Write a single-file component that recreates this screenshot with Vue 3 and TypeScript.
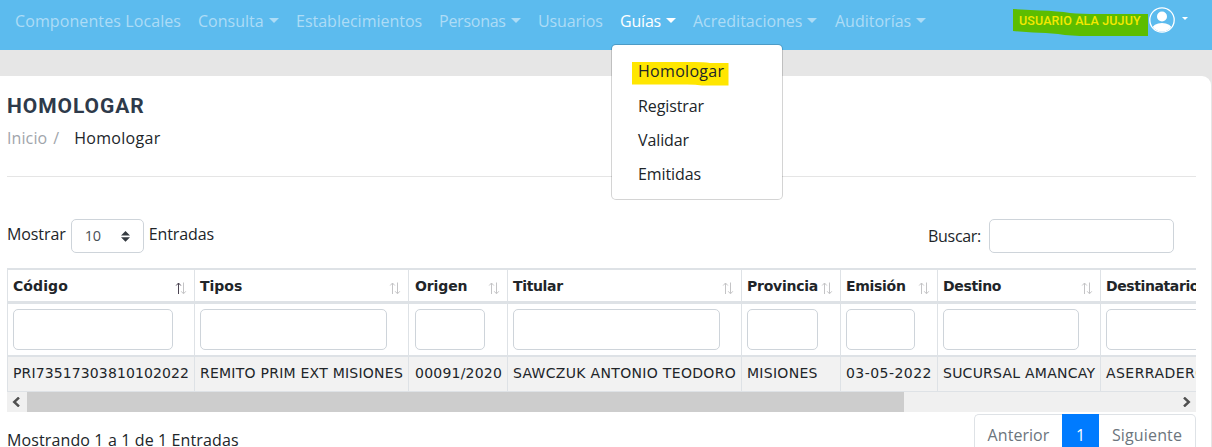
<script setup lang="ts">
interface NavItem { label: string; width: number; spacing: number; caret?: boolean; active?: boolean }
interface Column { title: string; value: string; width: number; field: number; titleSpacing: number; spacing: number; wide?: boolean }

const navItems: NavItem[] = [
  { label: 'Componentes Locales', width: 183, spacing: 0.1 },
  { label: 'Consulta', width: 98, spacing: 0, caret: true },
  { label: 'Establecimientos', width: 143, spacing: 0 },
  { label: 'Personas', width: 99, spacing: -0.25, caret: true },
  { label: 'Usuarios', width: 82, spacing: -0.15 },
  { label: 'Guías', width: 73, spacing: -0.2, caret: true, active: true },
  { label: 'Acreditaciones', width: 142, spacing: 0, caret: true },
  { label: 'Auditorías', width: 100, spacing: 0, caret: true },
]

const menuItems: string[] = ['Homologar', 'Registrar', 'Validar', 'Emitidas']

const columns: Column[] = [
  { title: 'Código', value: 'PRI73517303810102022', width: 187, field: 160, titleSpacing: 0.1, spacing: 0.12 },
  { title: 'Tipos', value: 'REMITO PRIM EXT MISIONES', width: 214, field: 187, titleSpacing: 0, spacing: 0.24 },
  { title: 'Origen', value: '00091/2020', width: 99, field: 70, titleSpacing: -0.1, spacing: 0.22, wide: true },
  { title: 'Titular', value: 'SAWCZUK ANTONIO TEODORO', width: 234, field: 207, titleSpacing: -0.35, spacing: 0.32 },
  { title: 'Provincia', value: 'MISIONES', width: 99, field: 71, titleSpacing: -0.25, spacing: 0.28 },
  { title: 'Emisión', value: '03-05-2022', width: 97, field: 69, titleSpacing: -0.3, spacing: 0.45 },
  { title: 'Destino', value: 'SUCURSAL AMANCAY', width: 163, field: 136, titleSpacing: -0.35, spacing: 0.24 },
  { title: 'Destinatario', value: 'ASERRADERO', width: 150, field: 123, titleSpacing: -0.4, spacing: 0.45 },
]
</script>

<template>
  <div class="page">
    <header class="navbar">
      <nav class="nav">
        <a v-for="item in navItems" :key="item.label" class="nav-link" :class="{ active: item.active }" :style="{ width: item.width + 'px' }">
          <span :style="{ letterSpacing: item.spacing + 'px' }">{{ item.label }}</span><i v-if="item.caret" class="caret"></i>
        </a>
      </nav>
      <div class="user">
        <div class="user-tag">
          <svg class="mark" width="136" height="28" viewBox="0 0 136 28"><path d="M0 0L27 1.5Q45 2 57 4Q68 5 85 5H135V27H75Q58 27 45 25Q33 23.5 20 23.5L0 22Z" fill="#5cbd00" /></svg>
          <span class="user-name">USUARIO ALA JUJUY</span>
        </div>
        <svg class="avatar" width="27" height="27" viewBox="0 0 27 27">
          <defs><clipPath id="face"><circle cx="13" cy="14" r="11.5" /></clipPath></defs>
          <circle cx="13" cy="14" r="12.2" fill="none" stroke="#fff" stroke-width="1.3" />
          <circle cx="13" cy="10.5" r="5" fill="#fff" />
          <ellipse cx="13" cy="23" rx="10" ry="6" fill="#fff" clip-path="url(#face)" />
        </svg>
        <i class="caret small"></i>
      </div>
    </header>

    <main class="card">
      <h1>HOMOLOGAR</h1>
      <div class="crumbs"><span class="muted">Inicio</span><span class="muted slash">/</span><span class="here">Homologar</span></div>
      <hr />
      <div class="controls">
        <div class="length">
          <span>Mostrar</span>
          <div class="select"><span>10</span><svg width="9" height="11" viewBox="0 0 9 11"><path d="M4.5 0L9 4.5H0ZM0 6.2H9L4.5 10.7Z" fill="#343a40" /></svg></div>
          <span>Entradas</span>
        </div>
        <label class="search"><span>Buscar:</span><input type="text" /></label>
      </div>

      <div class="table-wrap">
        <div class="table">
          <div v-for="(col, i) in columns" :key="col.title" class="col" :class="{ wide: col.wide }" :style="{ width: col.width + 'px' }">
            <div class="th">
              <span :style="{ letterSpacing: col.titleSpacing + 'px' }">{{ col.title }}</span>
              <svg width="12" height="13" viewBox="0 0 12 13" fill="none">
                <path d="M3.5 12V1M1.2 3.5L3.5 1L5.8 3.5" :stroke="i === 0 ? '#4b4452' : '#c4c4c6'" />
                <path d="M8.5 .5V11.5M6.2 9.3L8.5 11.8L10.8 9.3" stroke="#c4c4c6" />
              </svg>
            </div>
            <div class="filter"><input type="text" :style="{ width: col.field + 'px' }" /></div>
            <div class="td"><span :style="{ letterSpacing: col.spacing + 'px' }">{{ col.value }}</span></div>
          </div>
        </div>
        <div class="scrollbar">
          <div class="arrow"><svg width="8" height="10" viewBox="0 0 8 10"><path d="M7 .5L2.2 5L7 9.5" fill="none" stroke="#505050" stroke-width="2.4" /></svg></div>
          <div class="thumb"></div>
          <div class="arrow end"><svg width="8" height="10" viewBox="0 0 8 10"><path d="M1 .5L5.8 5L1 9.5" fill="none" stroke="#505050" stroke-width="2.4" /></svg></div>
        </div>
      </div>

      <footer class="footer">
        <span class="info">Mostrando 1 a 1 de 1 Entradas</span>
        <div class="pager"><span class="prev">Anterior</span><span class="current">1</span><span class="next">Siguiente</span></div>
      </footer>
    </main>

    <div class="dropdown">
      <svg class="mark" width="97" height="24" viewBox="0 0 97 24"><path d="M0 0H62Q72 0 78 1H96.5V23.5H70Q64 22.5 55 22.5H0Z" fill="#ffe600" /></svg>
      <a v-for="entry in menuItems" :key="entry">{{ entry }}</a>
    </div>
  </div>
</template>

<style>
body { margin: 0; }
</style>

<style scoped>
.page { position: relative; width: 1212px; height: 447px; overflow: hidden; background: #e6e6e6; color: #212529; font: 16px/24px "Open Sans", "Noto Sans", sans-serif; letter-spacing: -0.1px; white-space: nowrap; }
* { box-sizing: border-box; }
.navbar { display: flex; justify-content: space-between; height: 50px; background: #5cbbee; }
.nav { display: flex; padding: 9px 0 0 15px; }
.nav-link { display: flex; align-items: flex-start; color: #addcf6; }
.nav-link.active { color: #fff; }
.caret { margin: 9px 0 0 5px; border: 5px solid transparent; border-top-color: currentColor; border-bottom: 0; }
.user { display: flex; padding-right: 24px; color: #fff; }
.user-tag { position: relative; width: 136px; height: 40px; }
.user-tag .mark { position: absolute; left: 0; top: 9px; }
.user-name { position: relative; display: block; padding: 9px 0 0 6px; color: #f4e900; font: 500 12.5px/24px Roboto, sans-serif; letter-spacing: .12px; }
.avatar { margin-top: 6px; }
.caret.small { margin: 17px 0 0 6px; border-width: 3px 3px 0; }
.card { height: 400px; width: 1211px; margin-top: 26px; padding: 17px 15px 0 7px; background: #fff; border-radius: 0 9px 0 0; }
h1 { margin: 0; color: #2e3a4a; font: 700 21px/26px Roboto, sans-serif; letter-spacing: .95px; }
.crumbs { display: flex; margin-top: 7px; }
.muted { color: #9fa5ab; letter-spacing: .1px; }
.slash { margin: 0 15px 0 6px; }
.here { letter-spacing: .3px; }
hr { margin: 26px 0 0; border: 0; border-top: 1px solid #e5e5e5; }
.controls { display: flex; justify-content: space-between; height: 91px; padding: 42px 22px 0 0; }
.length, .search { display: flex; height: 34px; }
.length > span { padding-top: 3px; }
.select { display: flex; align-items: center; justify-content: space-between; width: 73px; height: 34px; margin: 0 5px; padding: 0 13px 0 13px; border: 1px solid #ced4da; border-radius: 5px; color: #495057; font-size: 14.5px; }
.search span { padding-top: 5px; letter-spacing: -.3px; }
input { border: 1px solid #ced4da; border-radius: 5px; background: #fff; padding: 0; }
.search input { width: 185px; height: 34px; margin-left: 8px; }
.table-wrap { width: 1189px; overflow: hidden; }
.table { display: flex; border-left: 1px solid #dee2e6; font: 14px/20px "DejaVu Sans", sans-serif; letter-spacing: 0; }
.col { flex: none; border-right: 1px solid #dee2e6; }
.th { display: flex; justify-content: space-between; height: 36px; padding: 6px 7px 0 5px; border-top: 2px solid #dee2e6; border-bottom: 3px solid #dee2e6; font-weight: 700; }
.th svg { flex: none; margin-top: 6px; }
.filter { height: 53px; padding: 5px; border-bottom: 2px solid #dee2e6; }
.filter input { display: block; height: 41px; border-radius: 5px; }
.td { height: 35px; padding: 6px 5px 0; border-bottom: 1px solid #dee2e6; background: #f2f2f2; }
.wide .th, .wide .filter, .wide .td { padding-left: 6px; }
.scrollbar { display: flex; height: 20px; background: #f0f0f0; }
.arrow { display: flex; align-items: center; justify-content: center; width: 18px; margin-right: 2px; }
.thumb { width: 877px; background: #cdcdcd; }
.arrow.end { margin: 0 0 0 auto; }
.footer { display: flex; justify-content: space-between; padding-top: 2px; }
.info { padding-top: 14px; letter-spacing: .12px; }
.pager { display: flex; height: 38px; line-height: 40px; text-align: center; color: #6c757d; }
.prev { width: 88px; border: 1px solid #dee2e6; border-right: 0; border-radius: 5px 0 0 5px; letter-spacing: .05px; }
.current { width: 37px; background: #007bff; color: #fff; line-height: 42px; }
.next { width: 97px; border: 1px solid #dee2e6; border-left: 0; border-radius: 0 5px 5px 0; letter-spacing: .15px; }
.dropdown { position: absolute; left: 611px; top: 44px; width: 172px; height: 156px; padding: 9px 0 0 26px; background: #fff; background-clip: padding-box; border: 1px solid rgba(0,0,0,.17); border-radius: 5px; }
.dropdown a { position: relative; display: block; height: 34px; line-height: 34px; }
.dropdown a:first-of-type { height: 35px; letter-spacing: .3px; }
.dropdown .mark { position: absolute; left: 20px; top: 17px; }
</style>
